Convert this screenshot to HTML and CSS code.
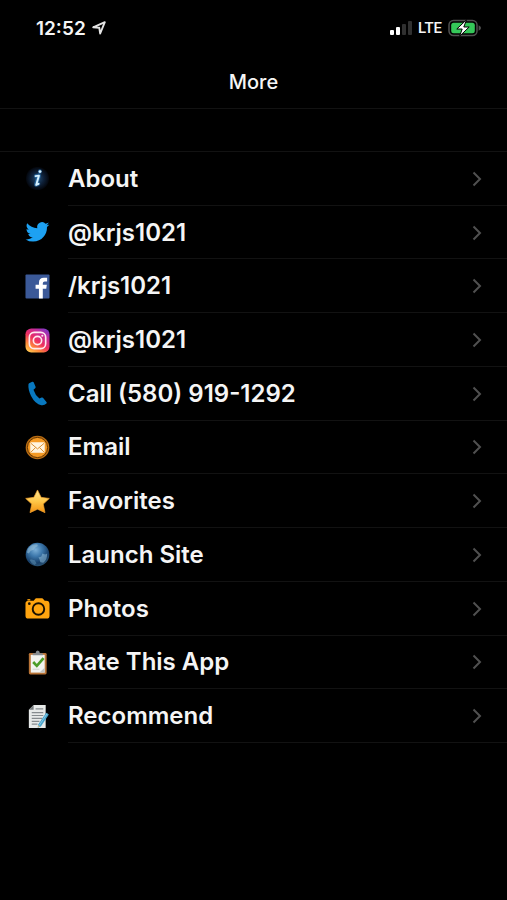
FILE: index.html
```html
<!DOCTYPE html>
<html lang="en">
<head>
<meta charset="utf-8">
<meta name="viewport" content="width=device-width, initial-scale=1">
<title>More</title>
<link rel="stylesheet" href="styles.css">
</head>
<body>
<div class="status">
  <div class="status-group">
    <span class="time">12:52</span>
    <svg class="location" viewBox="0 0 14 14" aria-hidden="true"><path d="M1.200 6.300 12.800 1.200 8.200 12.500 7.300 6.800Z" fill="none" stroke="#e4e4e4" stroke-width="1.900" stroke-linejoin="round"/></svg>
  </div>
  <div class="status-group status-right">
    <svg class="signal" viewBox="0 0 22 14" aria-hidden="true"><rect x="0" y="9" width="4" height="5" rx="1" fill="#fff"/><rect x="6" y="6" width="4" height="8" rx="1" fill="#fff"/><rect x="12" y="3" width="4" height="11" rx="1" fill="#303030"/><rect x="18" y="0" width="4" height="14" rx="1" fill="#303030"/></svg>
    <span class="network">LTE</span>
    <svg class="battery" viewBox="0 0 34 18" aria-hidden="true"><rect x="1" y="1.500" width="28" height="15" rx="4.500" fill="#000" stroke="#505050" stroke-width="1.500"/><rect x="3.200" y="3.700" width="23.600" height="10.600" rx="2.500" fill="#35c759"/><path d="M30.600 6.200Q33 7.200 33 9t-2.400 2.800Z" fill="#505050"/><path d="M18.500 .8 8.800 10h5.400L11.600 17.200 21.200 8h-5.400Z" fill="#fff" stroke="#000" stroke-width="1"/></svg>
  </div>
</div>
<header class="titlebar"><h1>More</h1></header>
<main>
<ul class="menu">
  <li><a href="#about">
    <svg class="icon" viewBox="0 0 26 26" aria-hidden="true"><defs><radialGradient id="glow"><stop offset="0" stop-color="#245078"/><stop offset=".55" stop-color="#0e2038"/><stop offset="1" stop-color="#03060c"/></radialGradient></defs><circle cx="13" cy="13" r="12" fill="url(#glow)"/><path d="M15.500 5.500v.5M11.500 10.500l3-.5-3.200 9.500 2.500-.8" fill="none" stroke="#2d80c7" stroke-width="4.200" stroke-linecap="round" stroke-linejoin="round" opacity=".55"/><path d="m11 10.500 3.500-.5-2.900 9.700 2.500-1.200" fill="none" stroke="#d5f1ff" stroke-width="2" stroke-linejoin="round" stroke-linecap="round"/><circle cx="15.600" cy="5.800" r="1.500" fill="#d5f1ff"/></svg>
    <span class="label">About</span><svg class="chevron" viewBox="0 0 10 16" aria-hidden="true"><path d="m1.500 1.500 6.500 6.500-6.500 6.500"/></svg></a></li>
  <li><a href="#twitter">
    <svg class="icon" viewBox="-.6 0 25.200 25.200" aria-hidden="true"><path fill="#1da1f2" d="M23.954 4.569a10 10 0 0 1-2.825.775 4.958 4.958 0 0 0 2.163-2.723c-.951.555-2.005.959-3.127 1.184a4.920 4.920 0 0 0-8.384 4.482C7.691 8.094 4.066 6.130 1.640 3.161a4.822 4.822 0 0 0-.666 2.475c0 1.710.870 3.213 2.188 4.096a4.904 4.904 0 0 1-2.228-.616v.061a4.923 4.923 0 0 0 3.946 4.827 4.996 4.996 0 0 1-2.212.085 4.937 4.937 0 0 0 4.604 3.417 9.868 9.868 0 0 1-6.102 2.105c-.39 0-.779-.023-1.170-.067a13.995 13.995 0 0 0 7.557 2.209c9.054 0 13.999-7.496 13.999-13.986 0-.209 0-.42-.015-.63a9.936 9.936 0 0 0 2.460-2.548z"/></svg>
    <span class="label">@krjs1021</span><svg class="chevron" viewBox="0 0 10 16" aria-hidden="true"><path d="m1.500 1.500 6.500 6.500-6.500 6.500"/></svg></a></li>
  <li><a href="#facebook">
    <svg class="icon" viewBox="0 0 26 26" aria-hidden="true"><rect x=".5" y=".5" width="25" height="25" rx="1" fill="#3b5998"/><path d="M14.500 25.500V15.300H11v-4h3.500V9q0-5 5.200-5h3.300v3.800h-2.500q-2 0-2 2v1.500h4.200l-.6 4h-3.600v10.200Z" fill="#fff"/></svg>
    <span class="label">/krjs1021</span><svg class="chevron" viewBox="0 0 10 16" aria-hidden="true"><path d="m1.500 1.500 6.500 6.500-6.500 6.500"/></svg></a></li>
  <li><a href="#instagram">
    <svg class="icon" viewBox="0 0 26 26" aria-hidden="true"><defs><linearGradient id="ig" x1=".1" y1="1" x2=".8" y2="0"><stop offset="0" stop-color="#ffcf55"/><stop offset=".25" stop-color="#ff8a38"/><stop offset=".5" stop-color="#ee2f60"/><stop offset=".8" stop-color="#c42b9d"/><stop offset="1" stop-color="#8238c4"/></linearGradient></defs><rect x=".5" y=".5" width="25" height="25" rx="6" fill="url(#ig)"/><g fill="none" stroke="#ffe9ee" stroke-width="1.700"><rect x="4.500" y="4.500" width="17" height="17" rx="5"/><circle cx="13" cy="13" r="4.300"/></g><circle cx="18" cy="8" r="1.100" fill="#ffe9ee"/></svg>
    <span class="label">@krjs1021</span><svg class="chevron" viewBox="0 0 10 16" aria-hidden="true"><path d="m1.500 1.500 6.500 6.500-6.500 6.500"/></svg></a></li>
  <li><a href="tel:+15809191292">
    <svg class="icon" viewBox="0 0 26 26" aria-hidden="true"><path d="M4.300 2.300 7.500.8q1-.4 1.500.6l2 4.600q.3.900-.4 1.500L8.800 9q1.700 5.500 6.200 9.200l2.200-1q.8-.4 1.500.3l3.600 4.300q.7.800 0 1.600Q20 25.700 17 25.200 10.500 23.800 6.300 15.500 3 9 3.600 3.400q.1-.8.700-1.100Z" fill="#0878bf"/></svg>
    <span class="label">Call (580) 919-1292</span><svg class="chevron" viewBox="0 0 10 16" aria-hidden="true"><path d="m1.500 1.500 6.500 6.500-6.500 6.500"/></svg></a></li>
  <li><a href="#email">
    <svg class="icon" viewBox="0 0 26 26" aria-hidden="true"><circle cx="13" cy="13" r="12.300" fill="#b96c12"/><circle cx="13" cy="13" r="10.500" fill="#f59a24" stroke="#5e3200" stroke-width="1"/><rect x="5.500" y="7.500" width="15" height="11" rx="1" fill="#fff4df"/><path d="m6 8.500 7 6 7-6M6 18l5-5M20 18l-5-5" fill="none" stroke="#d88a2c" stroke-width="1"/></svg>
    <span class="label">Email</span><svg class="chevron" viewBox="0 0 10 16" aria-hidden="true"><path d="m1.500 1.500 6.500 6.500-6.500 6.500"/></svg></a></li>
  <li><a href="#favorites">
    <svg class="icon" viewBox="0 0 26 26" aria-hidden="true"><defs><linearGradient id="star" x1="0" y1="0" x2="0" y2="1"><stop offset="0" stop-color="#ffe694"/><stop offset=".5" stop-color="#ffc748"/><stop offset="1" stop-color="#f39110"/></linearGradient></defs><path d="m13 1 3.800 7.700 8.500 1.100-6.300 5.900 1.800 8.900L13 21l-7.800 3.600 1.800-8.900L.7 9.800l8.500-1.100Z" fill="url(#star)" stroke="#f2a02c" stroke-width=".7" stroke-linejoin="round"/></svg>
    <span class="label">Favorites</span><svg class="chevron" viewBox="0 0 10 16" aria-hidden="true"><path d="m1.500 1.500 6.500 6.500-6.500 6.500"/></svg></a></li>
  <li><a href="#site">
    <svg class="icon" viewBox="0 0 26 26" aria-hidden="true"><defs><radialGradient id="globe" cx=".42" cy=".3" r=".7"><stop offset="0" stop-color="#7cb0d8"/><stop offset=".4" stop-color="#3d78ac"/><stop offset=".8" stop-color="#173f69"/><stop offset="1" stop-color="#2a5273"/></radialGradient></defs><circle cx="13" cy="13" r="12.300" fill="url(#globe)"/><path d="M3 7Q7 2 13 2.500q1 2-2 3L9 8l-3 1-2 3-2-1Z" fill="#a3c8dc" opacity=".5"/><path d="m14 16 3-1 1-3 3 1 2-1q.5 6-4 9.500l-3-.5-1-3Z" fill="#8fbdda" opacity=".55"/><path d="m6 18 4 1 2 3-2 2q-4-2-5-5Z" fill="#6598b8" opacity=".5"/></svg>
    <span class="label">Launch Site</span><svg class="chevron" viewBox="0 0 10 16" aria-hidden="true"><path d="m1.500 1.500 6.500 6.500-6.500 6.500"/></svg></a></li>
  <li><a href="#photos">
    <svg class="icon" viewBox="0 0 26 26" aria-hidden="true"><path d="M4 5h5l1.500-2q.4-.6 1.200-.6h6q.8 0 1.200.6L20.500 5H22q3.500 0 3.500 3.500v12q0 3-3 3h-19q-3 0-3-3V8Q.5 5 4 5Z" fill="#ffa40f"/><circle cx="14" cy="13.500" r="6" fill="none" stroke="#1a1000" stroke-width="2"/><circle cx="4.500" cy="8" r="1.400" fill="#1a1000"/><path d="M2.500 4h3" stroke="#ffa40f" stroke-width="1.500"/></svg>
    <span class="label">Photos</span><svg class="chevron" viewBox="0 0 10 16" aria-hidden="true"><path d="m1.500 1.500 6.500 6.500-6.500 6.500"/></svg></a></li>
  <li><a href="#rate">
    <svg class="icon" viewBox="0 0 26 26" aria-hidden="true"><rect x="4" y="3" width="18.500" height="22.500" rx="1.500" fill="#b87336"/><path d="M6 5h14.500v18.500H6Z" fill="#f2f3f0"/><path d="m15 23.500 5.500-5v5Z" fill="#bfc2c0"/><path d="M8 5.500V3.300h3Q11.200.5 13.200.5t2.300 2.800h3v2.200Z" fill="#858b90"/><path d="m8.500 12.500 3.800 4 7-8" fill="none" stroke="#4b9d28" stroke-width="2.800"/><path d="M8 20h7" stroke="#ced2cd"/></svg>
    <span class="label">Rate This App</span><svg class="chevron" viewBox="0 0 10 16" aria-hidden="true"><path d="m1.500 1.500 6.500 6.500-6.500 6.500"/></svg></a></li>
  <li><a href="#recommend">
    <svg class="icon" viewBox="0 0 26 26" aria-hidden="true"><path d="M9 1h12.500v24H4V6Z" fill="#e7e9e8"/><path d="M9 1v5H4Z" fill="#74797c"/><path d="M11 5h8M7 9h12M7 12h12M7 15h11M7 18h8M7 21h6" stroke="#868b8e" stroke-width="1.200"/><path d="m22 9 2.800 1.800-8.300 12.500-3.200 1.400.4-3.400Z" fill="#4aa3cb"/><path d="m23 10-8.300 12.400" stroke="#92d4ee" stroke-width=".8"/><path d="m13.500 22 2 1.300-2.200 1.200Z" fill="#d8b57c"/></svg>
    <span class="label">Recommend</span><svg class="chevron" viewBox="0 0 10 16" aria-hidden="true"><path d="m1.500 1.500 6.500 6.500-6.500 6.500"/></svg></a></li>
</ul>
</main>
</body>
</html>
```
FILE: styles.css
```css
* {
  box-sizing: border-box;
}

body {
  margin: 0;
  min-height: 100vh;
  background: #000;
  color: #f5f5f5;
  font-family: Inter, "Liberation Sans", sans-serif;
}

.status {
  display: flex;
  align-items: center;
  justify-content: space-between;
  height: 56px;
  padding: 0 25px 0 36px;
}

.status-group {
  display: flex;
  align-items: center;
  gap: 6px;
}

.time {
  font-size: 19px;
  font-weight: 600;
}

.location {
  width: 14px;
  height: 14px;
}

.signal {
  width: 22px;
  height: 14px;
}

.network {
  font-family: Roboto, Inter, sans-serif;
  font-size: 15px;
  font-weight: 500;
}

.battery {
  width: 34px;
  height: 18px;
}

.titlebar {
  display: flex;
  align-items: center;
  justify-content: center;
  height: 53px;
  border-bottom: 1px solid #121212;
}

.titlebar h1 {
  margin: 0;
  font-size: 20px;
  font-weight: 500;
}

.menu {
  display: grid;
  grid-auto-rows: 1fr;
  min-height: 592px;
  margin: 42px 0 0;
  padding: 0;
  border-top: 1px solid #121212;
  list-style: none;
}

.menu li {
  display: grid;
}

.menu a {
  display: grid;
  grid-template-columns: 25px 1fr 10px;
  column-gap: 18px;
  align-items: center;
  position: relative;
  padding: 0 25px;
  color: inherit;
  text-decoration: none;
}

/* Divider inset to line up with the labels */
.menu a::after {
  content: "";
  position: absolute;
  right: 0;
  bottom: 0;
  left: 68px;
  height: 1px;
  background: #121212;
}

.icon {
  width: 25px;
  height: 25px;
}

.label {
  font-size: 24px;
  font-weight: 600;
  line-height: 30px;
}

.chevron {
  width: 10px;
  height: 16px;
  fill: none;
  stroke: #505050;
  stroke-width: 2;
}
```
